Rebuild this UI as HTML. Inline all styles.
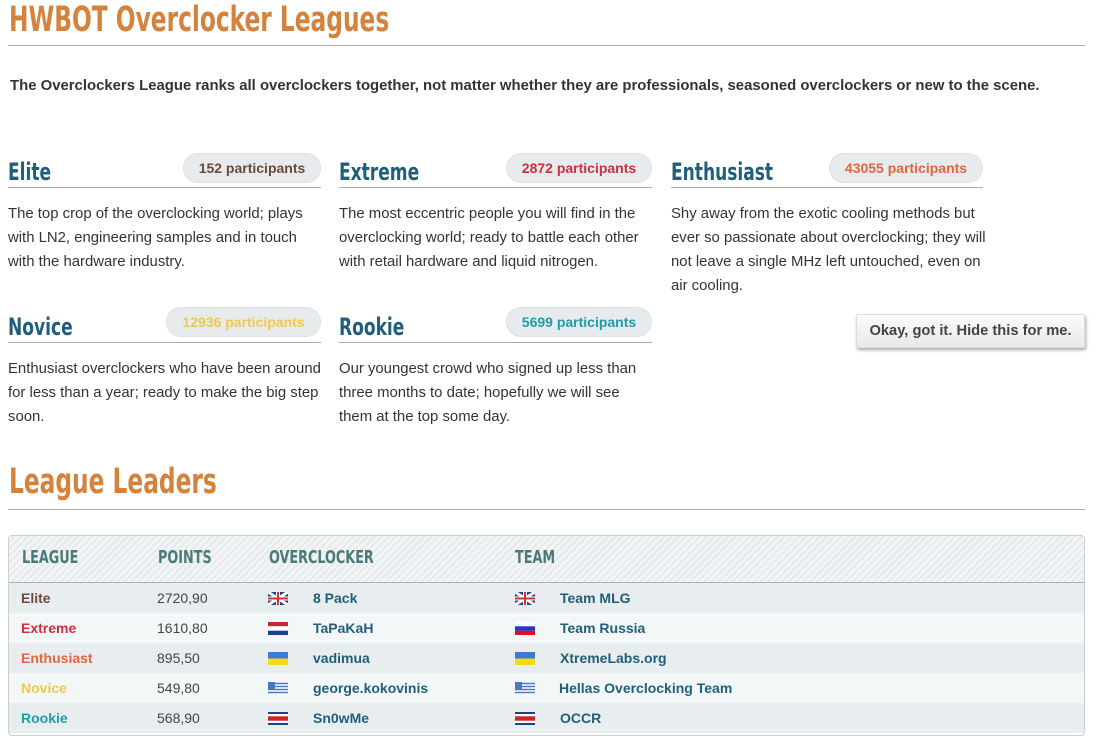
<!DOCTYPE html>
<html><head><meta charset="utf-8"><style>
body{margin:0;width:1096px;height:749px;background:#fff;font-family:"Liberation Sans",sans-serif;position:relative;overflow:hidden}
.a{position:absolute}
.cn{font-family:"DejaVu Sans Condensed","Liberation Sans",sans-serif;font-weight:bold;transform-origin:0 0;white-space:nowrap}
.h1{color:#d4823c;font-size:35px;transform:scaleX(0.74)}
.hr{position:absolute;height:1px;background:#aaa}
.hd{color:#1f5f7a;font-size:24px;transform:scaleX(0.79)}
.pill{position:absolute;height:30px;line-height:29px;border-radius:15px;background:#e7ebee;border:1px solid #dde2e5;font-weight:bold;font-size:14px;text-align:center;box-sizing:border-box}
.txt{position:absolute;font-size:14.9px;line-height:24px;color:#333;width:315px}
.tbl{position:absolute;left:8px;top:535px;width:1077px;height:201px;border:1px solid #c9d0d4;border-radius:4px;overflow:hidden;box-sizing:border-box}
.th{position:absolute;left:0;top:0;width:100%;height:46px;border-bottom:1px solid #aab3b8;background:repeating-linear-gradient(135deg,#f2f4f5 0 3px,#e6eaec 3px 5px)}
.th span{position:absolute;top:11px;color:#4a7a7a;font-size:18px;transform:scaleX(0.79)}
.row{position:absolute;left:0;width:100%;height:30px;line-height:30px;font-size:14px}
.row span{position:absolute}
.b{font-weight:bold}
.n{color:#1f5f7a;font-weight:bold}
.f{top:9px;width:20px;height:13px;display:block}
</style></head><body>
<div class="a cn h1" style="left:9px;top:0px">HWBOT Overclocker Leagues</div>
<div class="hr" style="left:8px;top:45px;width:1077px"></div>
<div class="a" style="left:10px;top:78px;font-size:14.9px;font-weight:bold;color:#333;white-space:nowrap">The Overclockers League ranks all overclockers together, not matter whether they are professionals, seasoned overclockers or new to the scene.</div>

<div class="a cn hd" style="left:8px;top:158px">Elite</div>
<div class="pill" style="left:183px;top:153px;width:138px;color:#6b4a3a">152 participants</div>
<div class="hr" style="left:8px;top:187px;width:313px"></div>
<div class="txt" style="left:8px;top:202px">The top crop of the overclocking world; plays with LN2, engineering samples and in touch with the hardware industry.</div>

<div class="a cn hd" style="left:339px;top:158px">Extreme</div>
<div class="pill" style="left:506px;top:153px;width:146px;color:#c8323c">2872 participants</div>
<div class="hr" style="left:339px;top:187px;width:313px"></div>
<div class="txt" style="left:339px;top:202px">The most eccentric people you will find in the overclocking world; ready to battle each other with retail hardware and liquid nitrogen.</div>

<div class="a cn hd" style="left:671px;top:158px">Enthusiast</div>
<div class="pill" style="left:829px;top:153px;width:154px;color:#e0663e">43055 participants</div>
<div class="hr" style="left:671px;top:187px;width:312px"></div>
<div class="txt" style="left:671px;top:202px">Shy away from the exotic cooling methods but ever so passionate about overclocking; they will not leave a single MHz left untouched, even on air cooling.</div>

<div class="a cn hd" style="left:8px;top:313px">Novice</div>
<div class="pill" style="left:166px;top:307px;width:155px;color:#f0c84a">12936 participants</div>
<div class="hr" style="left:8px;top:342px;width:313px"></div>
<div class="txt" style="left:8px;top:357px">Enthusiast overclockers who have been around for less than a year; ready to make the big step soon.</div>

<div class="a cn hd" style="left:339px;top:313px">Rookie</div>
<div class="pill" style="left:506px;top:307px;width:146px;color:#1e9ea8">5699 participants</div>
<div class="hr" style="left:339px;top:342px;width:313px"></div>
<div class="txt" style="left:339px;top:357px">Our youngest crowd who signed up less than three months to date; hopefully we will see them at the top some day.</div>

<div class="a" style="left:856px;top:314px;width:229px;height:34px;line-height:33px;text-align:center;font-weight:bold;font-size:14.7px;color:#444;background:linear-gradient(#fafafa,#e9e9e9);border:1px solid #ddd;box-sizing:border-box;box-shadow:1px 2px 3px rgba(0,0,0,.35);border-radius:2px">Okay, got it. Hide this for me.</div>

<div class="a cn h1" style="left:9px;top:462px">League Leaders</div>
<div class="hr" style="left:8px;top:509px;width:1077px"></div>

<div class="tbl">
<div class="th"><span class="cn" style="left:13px">LEAGUE</span><span class="cn" style="left:149px">POINTS</span><span class="cn" style="left:260px">OVERCLOCKER</span><span class="cn" style="left:506px">TEAM</span></div>
<div class="row" style="top:47px;background:#e8edf0"><span class="b" style="left:12px;color:#6b4a3a">Elite</span><span style="left:148px;color:#444">2720,90</span>
<svg class="a f" style="left:259px" viewBox="0 0 20 13"><rect width="20" height="13" fill="#2b3f8a"/><path d="M0 0L20 13M20 0L0 13" stroke="#fff" stroke-width="3"/><path d="M10 0V13M0 6.5H20" stroke="#fff" stroke-width="4"/><path d="M10 0V13M0 6.5H20" stroke="#c33" stroke-width="2"/></svg>
<span class="n" style="left:304px">8 Pack</span>
<svg class="a f" style="left:506px" viewBox="0 0 20 13"><rect width="20" height="13" fill="#2b3f8a"/><path d="M0 0L20 13M20 0L0 13" stroke="#fff" stroke-width="3"/><path d="M10 0V13M0 6.5H20" stroke="#fff" stroke-width="4"/><path d="M10 0V13M0 6.5H20" stroke="#c33" stroke-width="2"/></svg>
<span class="n" style="left:551px">Team MLG</span></div>
<div class="row" style="top:77px;background:#f4f7f8"><span class="b" style="left:12px;color:#c8323c">Extreme</span><span style="left:148px;color:#444">1610,80</span>
<svg class="a f" style="left:259px" viewBox="0 0 20 13"><rect width="20" height="4.3" fill="#c0283a"/><rect y="4.3" width="20" height="4.4" fill="#fff"/><rect y="8.7" width="20" height="4.3" fill="#22408a"/></svg>
<span class="n" style="left:304px">TaPaKaH</span>
<svg class="a f" style="left:506px" viewBox="0 0 20 13"><rect width="20" height="4.3" fill="#fff"/><rect y="4.3" width="20" height="4.4" fill="#1a3ad0"/><rect y="8.7" width="20" height="4.3" fill="#e0101a"/></svg>
<span class="n" style="left:551px">Team Russia</span></div>
<div class="row" style="top:107px;background:#e8edf0"><span class="b" style="left:12px;color:#e0663e">Enthusiast</span><span style="left:148px;color:#444">895,50</span>
<svg class="a f" style="left:259px" viewBox="0 0 20 13"><rect width="20" height="6.5" fill="#3a7ad8"/><rect y="6.5" width="20" height="6.5" fill="#f4d81c"/></svg>
<span class="n" style="left:304px">vadimua</span>
<svg class="a f" style="left:506px" viewBox="0 0 20 13"><rect width="20" height="6.5" fill="#3a7ad8"/><rect y="6.5" width="20" height="6.5" fill="#f4d81c"/></svg>
<span class="n" style="left:551px">XtremeLabs.org</span></div>
<div class="row" style="top:137px;background:#f4f7f8"><span class="b" style="left:12px;color:#f0c84a">Novice</span><span style="left:148px;color:#444">549,80</span>
<svg class="a f" style="left:259px" viewBox="0 0 20 13"><rect width="20" height="13" fill="#fff"/><path d="M0 1.5H20M0 4.5H20M0 7.5H20M0 10.5H20" stroke="#4a78c0" stroke-width="1.5"/><rect width="7" height="7" fill="#4a78c0"/></svg>
<span class="n" style="left:304px">george.kokovinis</span>
<svg class="a f" style="left:506px" viewBox="0 0 20 13"><rect width="20" height="13" fill="#fff"/><path d="M0 1.5H20M0 4.5H20M0 7.5H20M0 10.5H20" stroke="#4a78c0" stroke-width="1.5"/><rect width="7" height="7" fill="#4a78c0"/></svg>
<span class="n" style="left:550px">Hellas Overclocking Team</span></div>
<div class="row" style="top:167px;background:#e8edf0"><span class="b" style="left:12px;color:#1e9ea8">Rookie</span><span style="left:148px;color:#444">568,90</span>
<svg class="a f" style="left:259px" viewBox="0 0 20 13"><rect width="20" height="13" fill="#22408a"/><rect y="2" width="20" height="9" fill="#fff"/><rect y="4.3" width="20" height="4.4" fill="#d0202a"/></svg>
<span class="n" style="left:304px">Sn0wMe</span>
<svg class="a f" style="left:506px" viewBox="0 0 20 13"><rect width="20" height="13" fill="#22408a"/><rect y="2" width="20" height="9" fill="#fff"/><rect y="4.3" width="20" height="4.4" fill="#d0202a"/></svg>
<span class="n" style="left:551px">OCCR</span></div>
</div>
</body></html>
